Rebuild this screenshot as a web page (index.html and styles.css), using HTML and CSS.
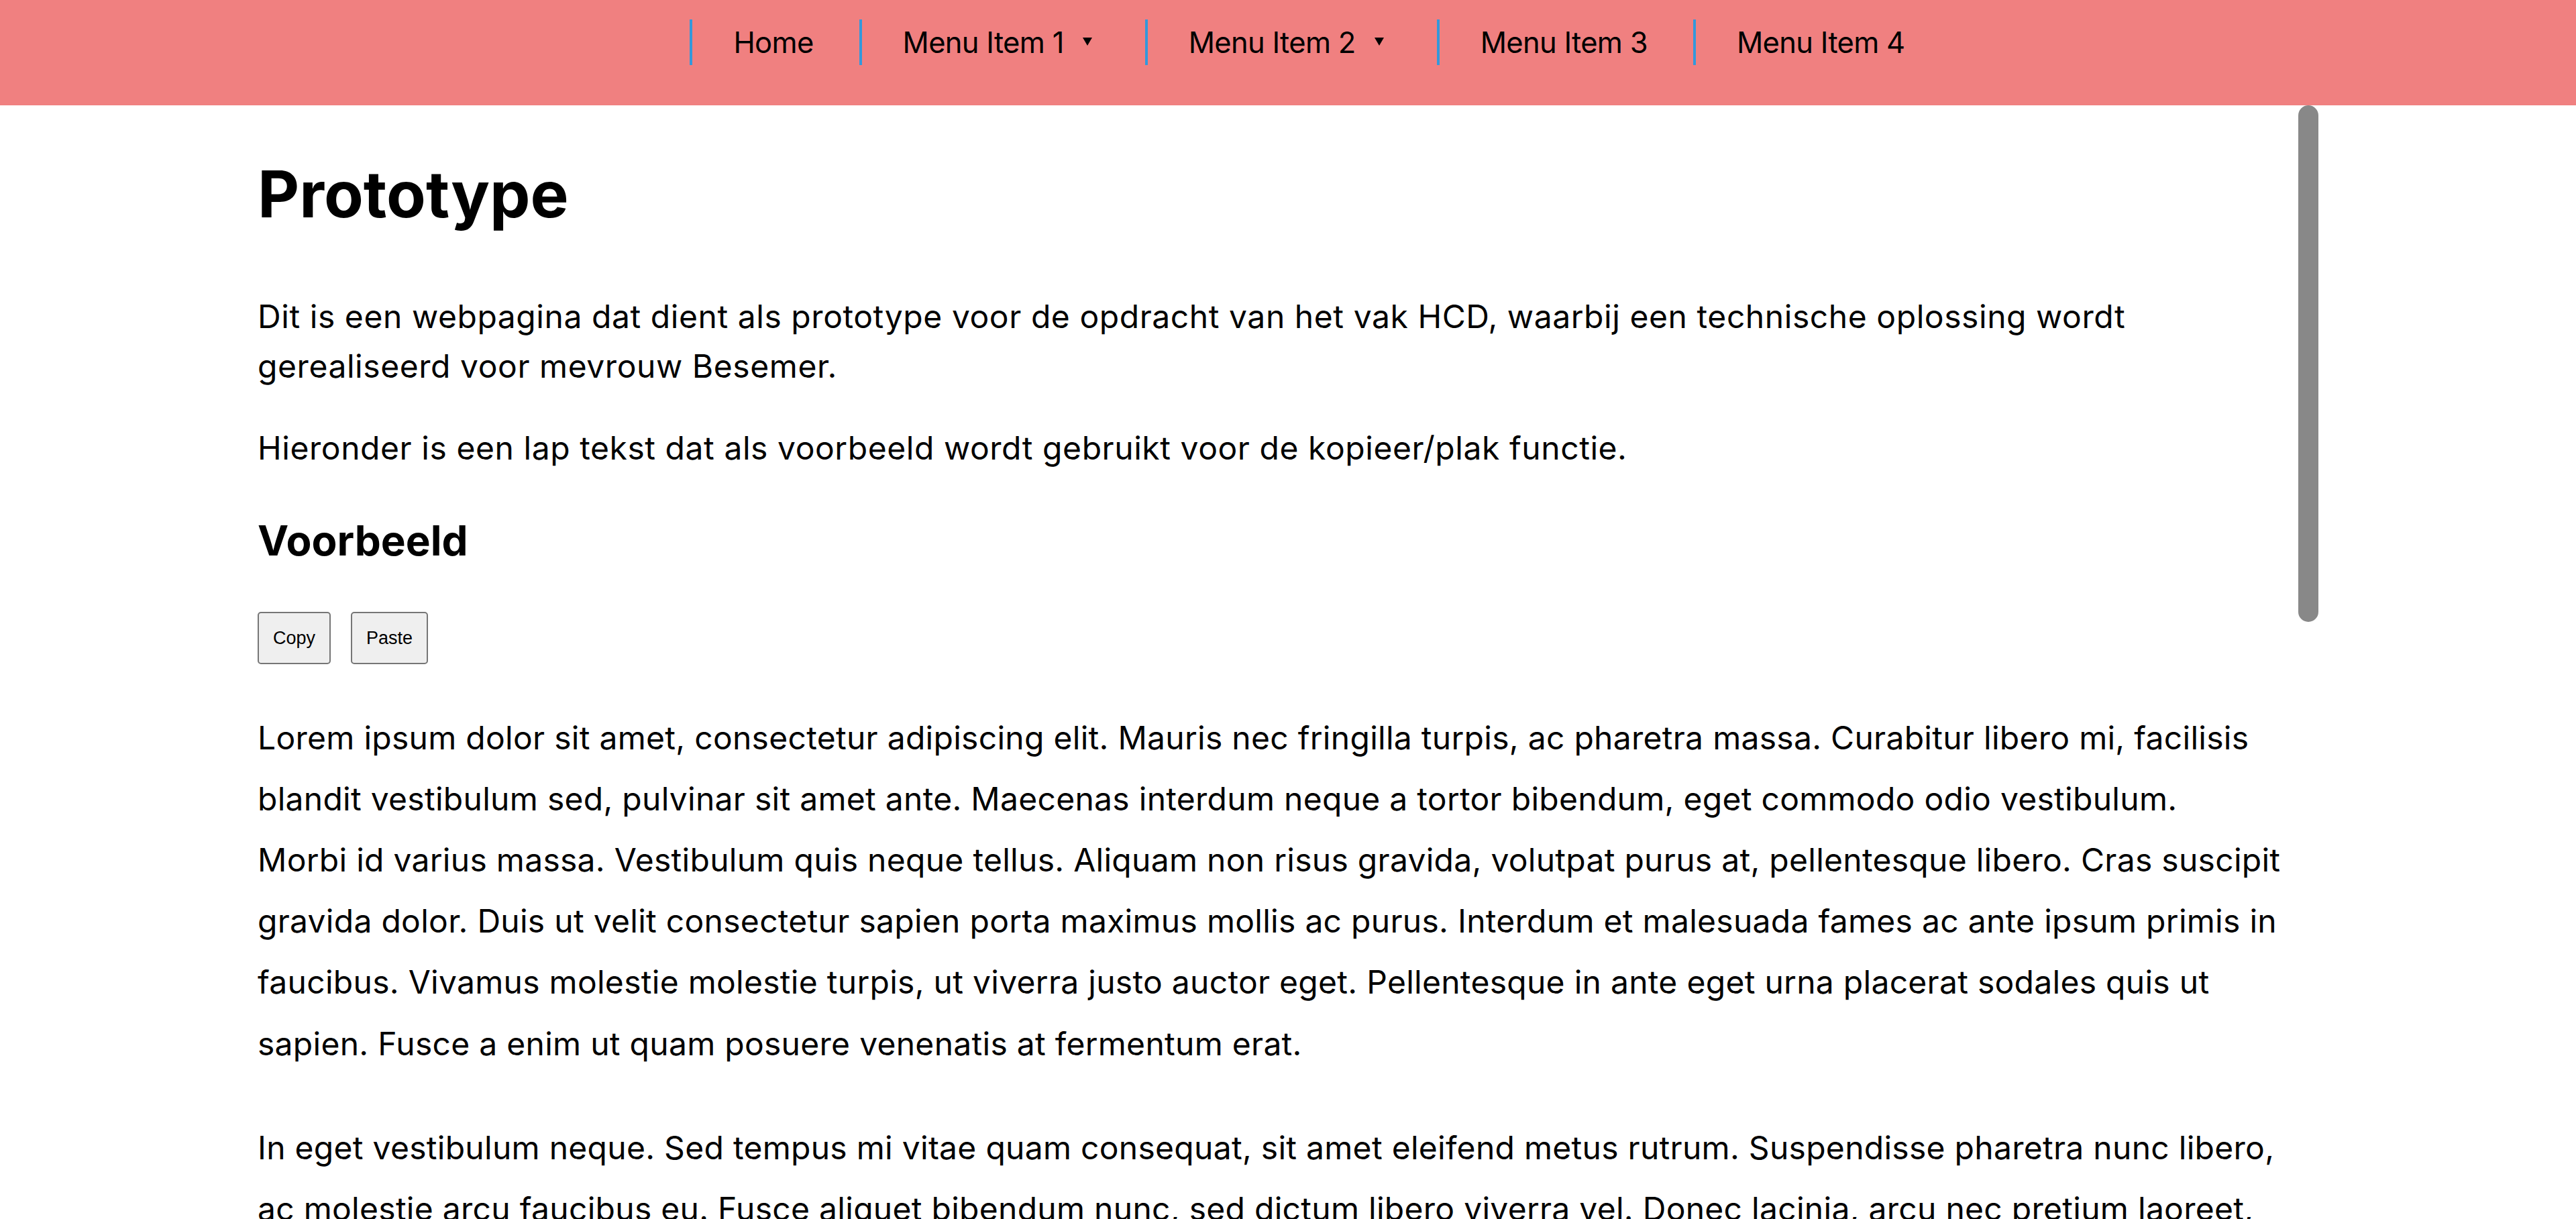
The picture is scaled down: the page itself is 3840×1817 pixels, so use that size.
FILE: index.html
```html
<!DOCTYPE html>
<html lang="nl">
<head>
<meta charset="utf-8">
<title>Prototype</title>
<link rel="stylesheet" href="styles.css">
</head>
<body>
<nav class="topnav">
  <ul class="menu">
    <li class="menu-item"><a class="menu-link" href="#">Home</a></li>
    <li class="menu-item"><a class="menu-link" href="#">Menu Item 1<span class="caret"></span></a></li>
    <li class="menu-item"><a class="menu-link" href="#">Menu Item 2<span class="caret"></span></a></li>
    <li class="menu-item"><a class="menu-link" href="#">Menu Item 3</a></li>
    <li class="menu-item"><a class="menu-link" href="#">Menu Item 4</a></li>
  </ul>
</nav>
<div class="viewport">
  <main class="content">
    <h1 class="title">Prototype</h1>
    <p class="intro">Dit is een webpagina dat dient als prototype voor de opdracht van het vak HCD, waarbij een technische oplossing wordt gerealiseerd voor mevrouw Besemer.</p>
    <p class="intro">Hieronder is een lap tekst dat als voorbeeld wordt gebruikt voor de kopieer/plak functie.</p>
    <h2 class="subtitle">Voorbeeld</h2>
    <div class="actions">
      <button class="btn" type="button">Copy</button>
      <button class="btn" type="button">Paste</button>
    </div>
    <div class="lorem">
      <p>Lorem ipsum dolor sit amet, consectetur adipiscing elit. Mauris nec fringilla turpis, ac pharetra massa. Curabitur libero mi, facilisis blandit vestibulum sed, pulvinar sit amet ante. Maecenas interdum neque a tortor bibendum, eget commodo odio vestibulum. Morbi&nbsp;id varius massa. Vestibulum quis neque tellus. Aliquam non risus gravida, volutpat purus at, pellentesque libero. Cras suscipit gravida dolor. Duis ut velit consectetur sapien porta maximus mollis ac purus. Interdum et malesuada fames ac ante ipsum primis in faucibus. Vivamus molestie molestie turpis, ut viverra justo auctor eget. Pellentesque in ante eget urna placerat sodales quis ut sapien. Fusce a enim ut quam posuere venenatis at fermentum erat.</p>
      <p>In eget vestibulum neque. Sed tempus mi vitae quam consequat, sit amet eleifend metus rutrum. Suspendisse pharetra nunc libero, ac molestie arcu faucibus eu. Fusce aliquet bibendum nunc, sed dictum libero viverra vel. Donec lacinia, arcu nec pretium laoreet, lacus ipsum tincidunt est, a mattis dolor sem sit amet nisi. Nam ultricies, ex sit amet egestas pharetra, nisi nisl ullamcorper dolor, vel sagittis risus magna vitae lectus. Aenean et efficitur nibh. Praesent eu lacus vitae nisi lobortis tempor. Nulla facilisi. Phasellus non tellus ut nunc volutpat convallis at eu leo. Vivamus ac nisi id odio feugiat sodales in in nibh. Curabitur eu sapien non dolor ultrices feugiat.</p>
      <p>Quisque vitae efficitur mi. Sed et sem at lectus dictum scelerisque. Nunc vehicula, justo at pretium hendrerit, nisl orci maximus magna, eu rutrum purus nisi ut tortor. Integer eleifend purus id magna ultricies, at egestas erat facilisis. Etiam pharetra massa nec mauris fringilla, non rutrum lorem vulputate. Morbi euismod velit at odio luctus, vitae sodales tortor laoreet. Donec at ultricies velit. Suspendisse potenti. Vestibulum ante ipsum primis in faucibus orci luctus et ultrices posuere cubilia curae; Proin sit amet tellus vel lectus placerat suscipit. Duis a turpis at sem porttitor tincidunt. Sed vel consequat ipsum, in viverra mauris. Aliquam erat volutpat.</p>
      <p>Maecenas sed sem ac orci congue luctus. Nullam ac finibus mauris. Cras ultrices, nunc a pharetra ultricies, est nibh euismod felis, eget ornare est ante sit amet urna. Pellentesque habitant morbi tristique senectus et netus et malesuada fames ac turpis egestas. Integer vulputate massa at nibh hendrerit, in dictum risus sollicitudin. Nunc sagittis quam at augue eleifend, non vulputate erat iaculis. Fusce vel dapibus eros, at molestie libero. Praesent pretium urna quis ligula faucibus, ac tincidunt nisl blandit. Donec sagittis, ligula in interdum euismod, dolor erat scelerisque lorem, et tincidunt augue velit vel arcu. Ut gravida ligula quis tellus tristique, sed bibendum lectus commodo.</p>
      <p>Etiam non lacus eu ex facilisis scelerisque. Nam eget enim nec arcu tempor vestibulum sit amet vitae neque. Aenean posuere nisl sed urna congue, id faucibus risus placerat. Phasellus quis dapibus arcu, nec pretium magna.</p>
    </div>
  </main>
  <div class="scroll-thumb" aria-hidden="true"></div>
</div>
</body>
</html>
```

FILE: styles.css
```css
html, body {
  margin: 0;
  padding: 0;
  height: 100%;
  overflow: hidden;
  background: #ffffff;
}

body {
  font-family: "Inter", "Noto Sans", sans-serif;
  color: #000000;
}

/* ---------- top navigation ---------- */
.topnav {
  height: 157px;
  box-sizing: border-box;
  padding-top: 29px;
  background: #f08080;
}

.menu {
  display: flex;
  justify-content: center;
  margin: 0;
  padding: 0 0 0 96px;
  list-style: none;
}

.menu-item {
  height: 68px;
  border-left: 4px solid #3498db;
}

.menu-link {
  display: block;
  height: 68px;
  padding: 0 68px 0 61px;
  font-size: 43.5px;
  letter-spacing: -0.7px;
  line-height: 68px;
  color: #000000;
  text-decoration: none;
  white-space: nowrap;
}

.caret {
  display: inline-block;
  width: 0;
  height: 0;
  margin: 0 11px 0 28px;
  border-left: 7px solid transparent;
  border-right: 7px solid transparent;
  border-top: 12px solid #000000;
  vertical-align: 11px;
}

/* ---------- main content ---------- */
.viewport {
  position: relative;
  height: calc(100vh - 157px);
  margin: 0 10%;
}

.content {
  height: 100%;
  box-sizing: border-box;
  padding: 0 42px 0 0;
  overflow: hidden;
}

.scroll-thumb {
  position: absolute;
  top: 0;
  right: 0;
  width: 30px;
  height: 770px;
  background: #888888;
  border-radius: 15px;
}

.title {
  margin: 75px 0 88px;
  font-size: 96px;
  font-weight: 700;
  line-height: 1.2;
}

.intro {
  margin: 48px 0;
  font-size: 48px;
  line-height: 74px;
  letter-spacing: 0.56px;
}

.subtitle {
  margin: 64px 0 68px;
  font-size: 62px;
  font-weight: 700;
  line-height: 1.2;
}

.actions {
  display: flex;
  gap: 30px;
}

.btn {
  box-sizing: border-box;
  height: 78px;
  padding: 0 21px;
  font-family: "Liberation Sans", Arial, sans-serif;
  font-size: 27px;
  line-height: 32px;
  color: #000000;
  background: #efefef;
  border: 2px solid #767676;
  border-radius: 5px;
}

.lorem p {
  margin: 64px 0;
  font-size: 48px;
  line-height: 91.2px;
  letter-spacing: 0.28px;
}
```
